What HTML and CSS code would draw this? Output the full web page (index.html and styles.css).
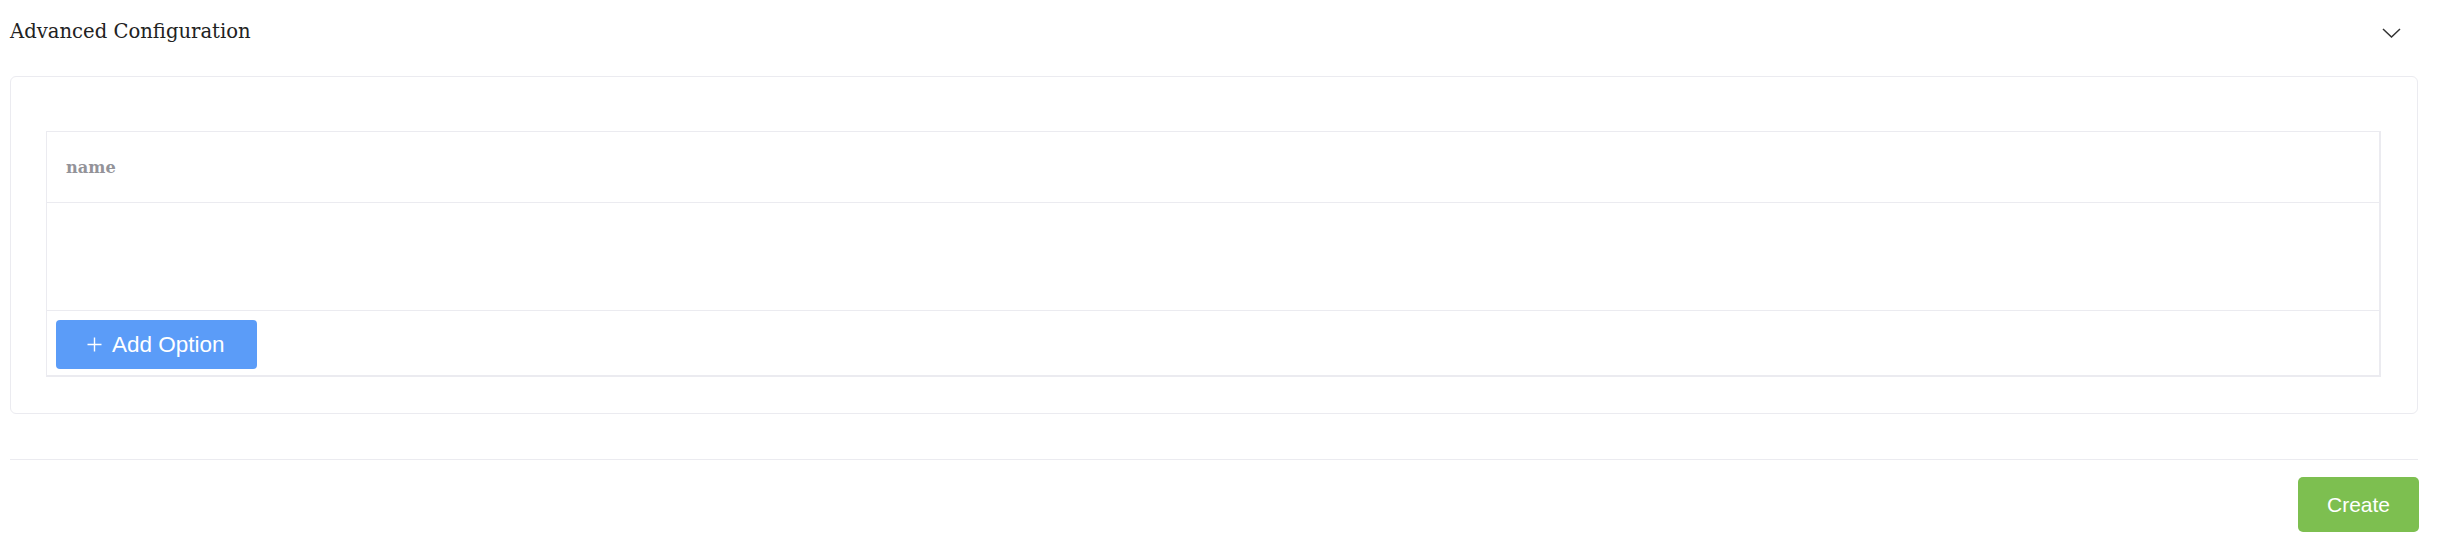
FILE: index.html
```html
<!DOCTYPE html>
<html lang="en">
<head>
<meta charset="utf-8">
<title>Advanced Configuration</title>
<link rel="stylesheet" href="styles.css">
</head>
<body>
<div class="page">
  <div class="section-header">
    <h2 class="section-title">Advanced Configuration</h2>
    <svg class="chevron" width="19" height="10" viewBox="0 0 19 10" aria-hidden="true">
      <polyline points="1,1 9.5,9 18,1" fill="none" stroke="#333" stroke-width="1.5"/>
    </svg>
  </div>
  <div class="card">
    <div class="table">
      <div class="table-head">
        <span class="col-name">name</span>
      </div>
      <div class="table-body"></div>
      <div class="table-foot">
        <button class="btn btn-primary" type="button">
          <svg class="plus" width="15" height="15" viewBox="0 0 15 15" aria-hidden="true">
            <path d="M7.5 0.5V14.5M0.5 7.5H14.5" stroke="#fff" stroke-width="1.4" fill="none"/>
          </svg>
          <span>Add Option</span>
        </button>
      </div>
    </div>
  </div>
  <hr class="divider">
  <div class="actions">
    <button class="btn btn-success" type="button">Create</button>
  </div>
</div>
</body>
</html>
```

FILE: styles.css
```css
html, body {
  margin: 0;
  padding: 0;
  background: #ffffff;
}

.page {
  padding: 0 28px 0 10px;
}

.section-header {
  display: flex;
  align-items: center;
  justify-content: space-between;
  height: 63px;
  padding-right: 17px;
}

.section-title {
  margin: 0;
  font-family: "DejaVu Serif", "Liberation Serif", serif;
  font-weight: normal;
  font-size: 19.6px;
  color: #222222;
}

.chevron {
  display: block;
  margin-top: 2px;
}

.card {
  margin-top: 13px;
  border: 1px solid #ebebf0;
  border-radius: 6px;
  padding: 54px 36px 36px 35px;
}

.table {
  border-style: solid;
  border-color: #ebebf0;
  border-width: 1px 2px 2px 1px;
}

.table-head {
  height: 70px;
  display: flex;
  align-items: center;
  padding-left: 19px;
  border-bottom: 1px solid #ebebf0;
}

.col-name {
  font-family: "DejaVu Serif", "Liberation Serif", serif;
  font-weight: bold;
  font-size: 16.2px;
  color: #939399;
}

.table-body {
  height: 107px;
  border-bottom: 1px solid #ebebf0;
}

.table-foot {
  padding: 9px 9px 6px 9px;
  height: 49px;
}

.btn {
  border: none;
  cursor: pointer;
  font-family: "Liberation Sans", Arial, sans-serif;
  font-size: 21px;
  color: #ffffff;
  display: inline-flex;
  align-items: center;
  justify-content: center;
}

.btn-primary {
  background: #5b9cf8;
  width: 201px;
  height: 49px;
  border-radius: 4px;
  gap: 10px;
  justify-content: flex-start;
  padding: 0 0 0 31px;
  font-size: 22.5px;
}

.plus {
  display: block;
}

.divider {
  margin: 45px 0 0 0;
  border: none;
  border-top: 1px solid #ebebf0;
  height: 0;
}

.actions {
  display: flex;
  justify-content: flex-end;
  padding-top: 17px;
  margin-right: -1px;
}

.btn-success {
  background: #7dbf50;
  width: 121px;
  height: 55px;
  border-radius: 5px;
}
```
